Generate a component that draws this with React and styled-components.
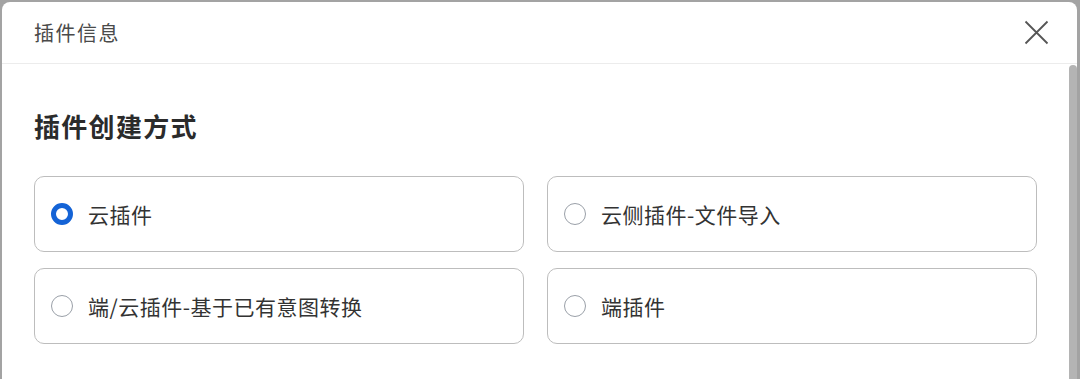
import React, { useState } from 'react'
import styled, { createGlobalStyle } from 'styled-components'

const GlobalStyle = createGlobalStyle`
  html, body {
    margin: 0;
    padding: 0;
    background: #a3a3a3;
  }
  body {
    font-family: "Noto Sans CJK SC", "Noto Sans", sans-serif;
  }
`

const Frame = styled.div`
  padding: 2px 3px 0 2px;
  height: 377px;
`

const Panel = styled.div`
  background: #fff;
  border-radius: 8px 8px 0 0;
  height: 100%;
  display: flex;
  flex-direction: column;
  overflow: hidden;
`

const Header = styled.div`
  height: 61px;
  flex: none;
  display: flex;
  align-items: center;
  justify-content: space-between;
  padding: 0 28px 0 32px;
  border-bottom: 1px solid #ececec;
`

const Title = styled.div`
  font-size: 20px;
  color: #4a4a4a;
  letter-spacing: 1.5px;
`

const CloseButton = styled.button`
  border: none;
  background: none;
  padding: 0;
  width: 26px;
  height: 26px;
  display: flex;
  align-items: center;
  justify-content: center;
  cursor: pointer;
`

const Body = styled.div`
  flex: 1;
  display: flex;
  min-height: 0;
`

const Content = styled.div`
  flex: 1;
  padding: 44px 32px 0 32px;
`

const Scrollbar = styled.div`
  width: 8px;
  flex: none;
  background: #b4b4b4;
  border-radius: 4px 4px 0 0;
  margin-top: 1px;
`

const Heading = styled.h2`
  margin: 0 0 32px;
  font-size: 26px;
  line-height: 36px;
  font-weight: 700;
  color: #2b2b2b;
  letter-spacing: 1.3px;
`

const Options = styled.div`
  display: grid;
  grid-template-columns: 1fr 1fr;
  column-gap: 23px;
  row-gap: 16px;
`

const Card = styled.label`
  height: 76px;
  box-sizing: border-box;
  border: 1.5px solid #bdbdbd;
  border-radius: 10px;
  display: flex;
  align-items: center;
  padding: 0 0 0 16px;
  gap: 15px;
  cursor: pointer;
`

const Radio = styled.span`
  width: 22px;
  height: 22px;
  box-sizing: border-box;
  border-radius: 50%;
  flex: none;
  border: ${p => (p.$checked ? '5px solid #1463d6' : '1.7px solid #9aa0a8')};
  background: #fff;
`

const Label = styled.span`
  font-size: 21px;
  color: #333;
  letter-spacing: 0.5px;
`

const options = [
  '云插件',
  '云侧插件-文件导入',
  '端/云插件-基于已有意图转换',
  '端插件',
]

export default function App() {
  const [selected, setSelected] = useState(0)
  return (
    <>
      <GlobalStyle />
      <Frame>
        <Panel>
          <Header>
            <Title>插件信息</Title>
            <CloseButton aria-label="关闭">
              <svg width="25" height="25" viewBox="0 0 25 25">
                <path d="M1.5 1.5 L23.5 23.5 M23.5 1.5 L1.5 23.5" stroke="#555" strokeWidth="1.8" fill="none" />
              </svg>
            </CloseButton>
          </Header>
          <Body>
            <Content>
              <Heading>插件创建方式</Heading>
              <Options>
                {options.map((o, i) => (
                  <Card key={o} onClick={() => setSelected(i)}>
                    <Radio $checked={selected === i} />
                    <Label>{o}</Label>
                  </Card>
                ))}
              </Options>
            </Content>
            <Scrollbar />
          </Body>
        </Panel>
      </Frame>
    </>
  )
}
